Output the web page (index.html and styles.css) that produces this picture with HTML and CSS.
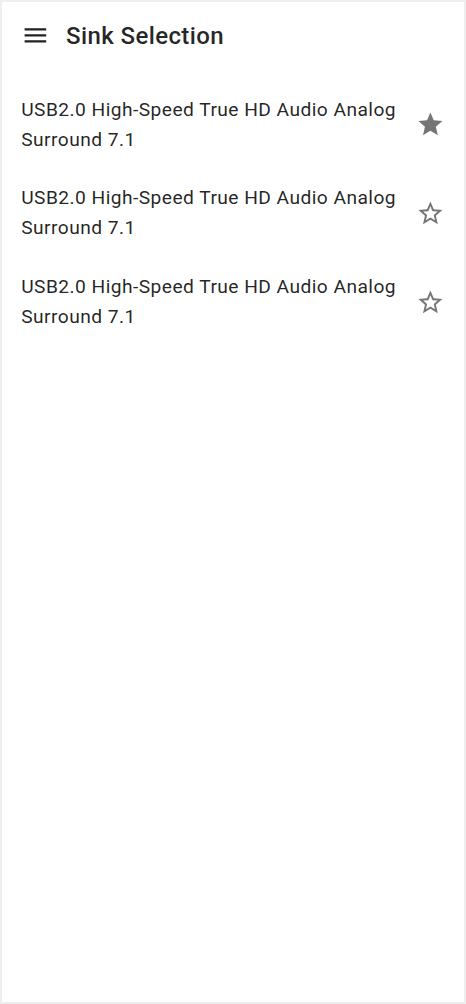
FILE: index.html
```html
<!DOCTYPE html>
<html lang="en">
<head>
<meta charset="utf-8">
<title>Sink Selection</title>
<link rel="stylesheet" href="styles.css">
</head>
<body>
<div class="app">
  <header class="toolbar">
    <svg class="icon menu-icon" viewBox="0 0 24 24" aria-hidden="true"><path d="M3 18h18v-2H3v2zm0-5h18v-2H3v2zm0-7v2h18V6H3z"/></svg>
    <h1 class="title">Sink Selection</h1>
  </header>
  <ul class="list">
    <li class="item">
      <span class="item-text">USB2.0 High-Speed True HD Audio Analog Surround 7.1</span>
      <svg class="icon star" viewBox="0 0 24 24" aria-hidden="true"><path d="M12 17.27L18.18 21l-1.64-7.03L22 9.24l-7.19-.61L12 2 9.19 8.63 2 9.24l5.46 4.73L5.82 21z"/></svg>
    </li>
    <li class="item">
      <span class="item-text">USB2.0 High-Speed True HD Audio Analog Surround 7.1</span>
      <svg class="icon star" viewBox="0 0 24 24" aria-hidden="true"><path d="M22 9.24l-7.19-.62L12 2 9.19 8.63 2 9.24l5.46 4.73L5.82 21 12 17.27 18.18 21l-1.63-7.03L22 9.24zM12 15.4l-3.760 2.27 1-4.28-3.32-2.88 4.38-.38L12 6.1l1.71 4.04 4.38.38-3.32 2.88 1 4.28L12 15.4z"/></svg>
    </li>
    <li class="item">
      <span class="item-text">USB2.0 High-Speed True HD Audio Analog Surround 7.1</span>
      <svg class="icon star" viewBox="0 0 24 24" aria-hidden="true"><path d="M22 9.24l-7.19-.62L12 2 9.19 8.63 2 9.24l5.46 4.73L5.82 21 12 17.27 18.18 21l-1.63-7.03L22 9.24zM12 15.4l-3.76 2.27 1-4.28-3.32-2.88 4.38-.38L12 6.1l1.71 4.04 4.38.38-3.32 2.88 1 4.28L12 15.4z"/></svg>
    </li>
  </ul>
</div>
</body>
</html>
```

FILE: styles.css
```css
html, body {
  margin: 0;
  padding: 0;
  background: #ffffff;
}
body {
  font-family: Roboto, "Liberation Sans", sans-serif;
  color: rgba(0, 0, 0, 0.87);
}
.app {
  box-sizing: border-box;
  width: 466px;
  height: 1004px;
  border: 2px solid #eeeeee;
  background: #ffffff;
}
.toolbar {
  display: flex;
  align-items: center;
  height: 67.2px;
  padding: 0 19.2px;
  gap: 16px;
}
.icon {
  width: 28.8px;
  height: 28.8px;
  flex: none;
  display: block;
}
.menu-icon {
  fill: rgba(0, 0, 0, 0.87);
}
.title {
  margin: 0;
  font-size: 24px;
  font-weight: 500;
  letter-spacing: 0.4px;
}
.list {
  list-style: none;
  margin: 0;
  padding: 11px 0 9.6px;
}
.item {
  display: flex;
  align-items: center;
  gap: 16px;
  padding: 14.4px 19.2px;
}
.item-text {
  flex: 1;
  font-size: 19.2px;
  line-height: 30px;
  letter-spacing: 0.45px;
}
.star {
  fill: rgba(0, 0, 0, 0.54);
}
```
